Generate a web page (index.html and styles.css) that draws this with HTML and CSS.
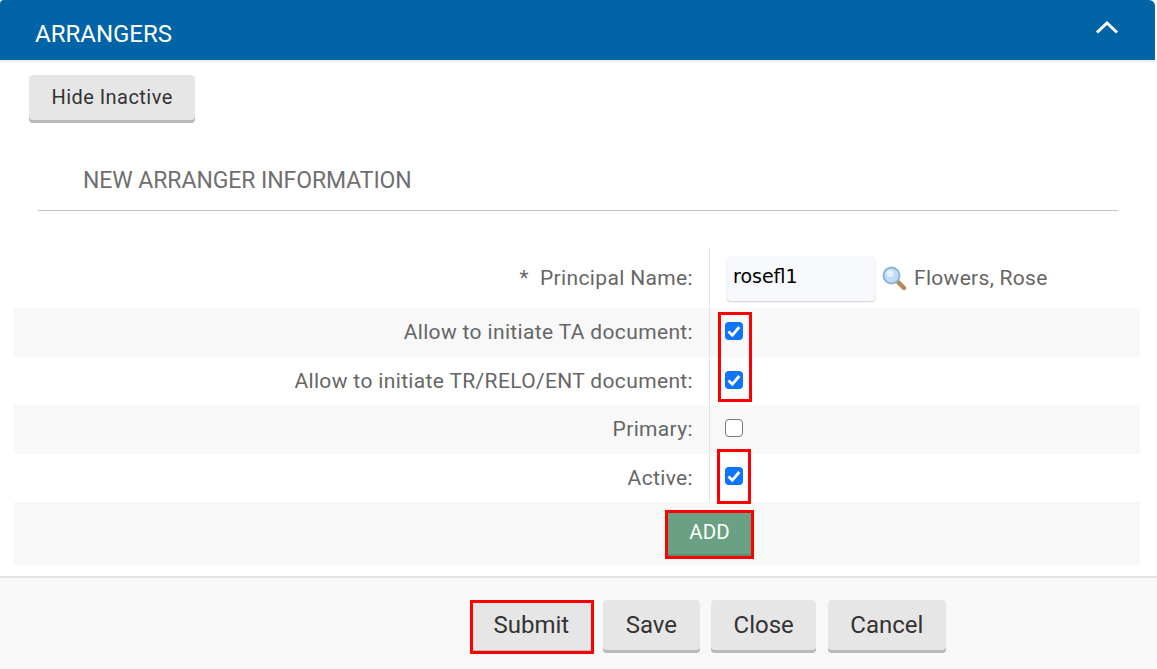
FILE: index.html
```html
<!DOCTYPE html>
<html lang="en">
<head>
<meta charset="utf-8">
<title>Arrangers</title>
<link rel="stylesheet" href="styles.css">
</head>
<body>
<div class="page">
  <header class="bar">
    <h1 class="bar-title">ARRANGERS</h1>
    <svg class="chevron" width="24" height="16" viewBox="0 0 24 16" aria-hidden="true"><path d="M2 13.500 12 4l10 9.500" fill="none" stroke="#fff" stroke-width="3"/></svg>
  </header>
  <main class="content">
    <div class="toolbar"><button class="btn" type="button">Hide Inactive</button></div>
    <h2 class="section-title">NEW ARRANGER INFORMATION</h2>
    <div class="form">
      <div class="row row-first">
        <div class="label"><span class="req">*</span>Principal Name:</div>
        <div class="field">
          <input class="text-input" type="text" value="rosefl1">
          <svg class="lens" width="26" height="26" viewBox="0 0 26 26" aria-hidden="true">
            <path d="M15 15l8 8" stroke="#b98a55" stroke-width="4.500" stroke-linecap="round"/>
            <circle cx="10.500" cy="10.500" r="8" fill="#c4dcf3" stroke="#8db4dc" stroke-width="2"/>
            <circle cx="9" cy="8.500" r="3.500" fill="#e6f1fb"/>
          </svg>
          <span class="name">Flowers, Rose</span>
        </div>
      </div>
      <div class="row row-shade">
        <div class="label">Allow to initiate TA document:</div>
        <div class="field"><input class="check" type="checkbox" checked></div>
      </div>
      <div class="row">
        <div class="label">Allow to initiate TR/RELO/ENT document:</div>
        <div class="field"><input class="check" type="checkbox" checked></div>
      </div>
      <div class="row row-shade">
        <div class="label">Primary:</div>
        <div class="field"><input class="check" type="checkbox"></div>
      </div>
      <div class="row row-last">
        <div class="label">Active:</div>
        <div class="field"><input class="check" type="checkbox" checked></div>
      </div>
      <div class="add-row"><button class="btn-add" type="button">ADD</button></div>
    </div>
  </main>
  <footer class="footer">
    <button class="btn btn-large" type="button">Submit</button>
    <button class="btn btn-large" type="button">Save</button>
    <button class="btn btn-large" type="button">Close</button>
    <button class="btn btn-large" type="button">Cancel</button>
  </footer>
  <div class="mark mark-checks"></div>
  <div class="mark mark-active"></div>
  <div class="mark mark-add"></div>
  <div class="mark mark-submit"></div>
</div>
</body>
</html>
```
FILE: styles.css
```css
* { box-sizing: border-box; }
html, body { margin: 0; padding: 0; background: #fff; }
body { font-family: Roboto, "Liberation Sans", sans-serif; color: #666; }
.page { position: relative; width: 1157px; height: 669px; overflow: hidden; display: flex; flex-direction: column; }

.bar { height: 60px; width: 1155px; flex: none; background: #0064a6; border-radius: 4px 6px 0 0; display: flex; align-items: center; justify-content: space-between; padding: 0 36px 0 35px; box-shadow: 0 2px 0 #eeeeee; }
.bar-title { margin: 0; font-size: 24px; font-weight: 400; color: #fff; line-height: 26px; position: relative; top: 4px; }
.chevron { margin-top: -6px; }

.content { flex: 1; display: flex; flex-direction: column; }
.toolbar { padding: 15px 0 0 29px; }
.btn { height: 48px; padding: 0 22.500px 5px; border: 0; border-radius: 4px; background: #e6e6e6; box-shadow: inset 0 -3px 0 #b9b9b9; color: #333; font-family: inherit; font-size: 20px; letter-spacing: .45px; }
.section-title { margin: 40px 0 0 38px; width: 1080px; height: 48px; padding: 0 0 0 45px; border-bottom: 1px solid #c4c4c4; font-size: 23px; line-height: 36px; font-weight: 400; letter-spacing: -.07px; color: #6f6f6f; }

.form { margin: 37px 0 0 14px; width: 1126px; }
.row { display: grid; grid-template-columns: 695px 1fr; height: 48.500px; }
.row-first { height: 60px; }
.row-shade { background: #f8f8f8; }
.label { display: flex; align-items: center; justify-content: flex-end; padding: 0 16px 0 0; font-size: 21px; letter-spacing: .35px; color: #666; }
.req { margin-right: 11px; }
.field { display: flex; align-items: center; border-left: 1px solid #dfe7e7; padding: 0 0 2px 15px; }
.row-first .field { padding: 0 0 0 17px; }
.row-last .field { padding-bottom: 4px; }
.text-input { width: 148px; height: 45px; padding: 0 6px 5px; border: 0; border-radius: 4px; background: #f6f8fc; box-shadow: 0 1px 2px #cfcfcf; font-family: "DejaVu Sans", sans-serif; font-size: 19px; color: #000; }
.lens { margin-left: 6px; flex: none; }
.name { margin-left: 7px; font-size: 21px; letter-spacing: .3px; color: #666; }
.check { appearance: none; width: 18px; height: 18px; margin: 0; border: 1.500px solid #767676; border-radius: 4px; background: #fff; }
.check:checked { border: 0; background: #0d75fb url("data:image/svg+xml,%3Csvg xmlns='http://www.w3.org/2000/svg' viewBox='0 0 18 18'%3E%3Cpath d='M3.500 9.500l3.800 3.800 7-8.300' fill='none' stroke='%23fff' stroke-width='2.800'/%3E%3C/svg%3E") center / 18px 18px no-repeat; }

.add-row { height: 63px; background: #f8f8f8; padding: 10px 0 0 653px; }
.btn-add { display: block; width: 85px; height: 44px; padding: 0 0 5px; border: 0; border-radius: 2px; background: #6aa084; box-shadow: inset 0 -2px 0 #5c8c73; color: #fff; font-family: inherit; font-size: 20.500px; }

.footer { flex: none; height: 93px; background: #f8f8f8; border-top: 2px solid #e4e4e4; display: flex; gap: 11.500px; padding: 22px 0 0 471px; }
.btn-large { height: 53px; font-size: 24px; padding: 0 22.500px 4px; letter-spacing: 0; }

.mark { position: absolute; border: 3px solid #f00; pointer-events: none; }
.mark-checks { left: 718px; top: 312px; width: 34px; height: 90px; }
.mark-active { left: 717px; top: 449px; width: 34px; height: 55px; }
.mark-add { left: 665px; top: 510px; width: 89px; height: 49px; }
.mark-submit { left: 470px; top: 600px; width: 124px; height: 54px; }
```
